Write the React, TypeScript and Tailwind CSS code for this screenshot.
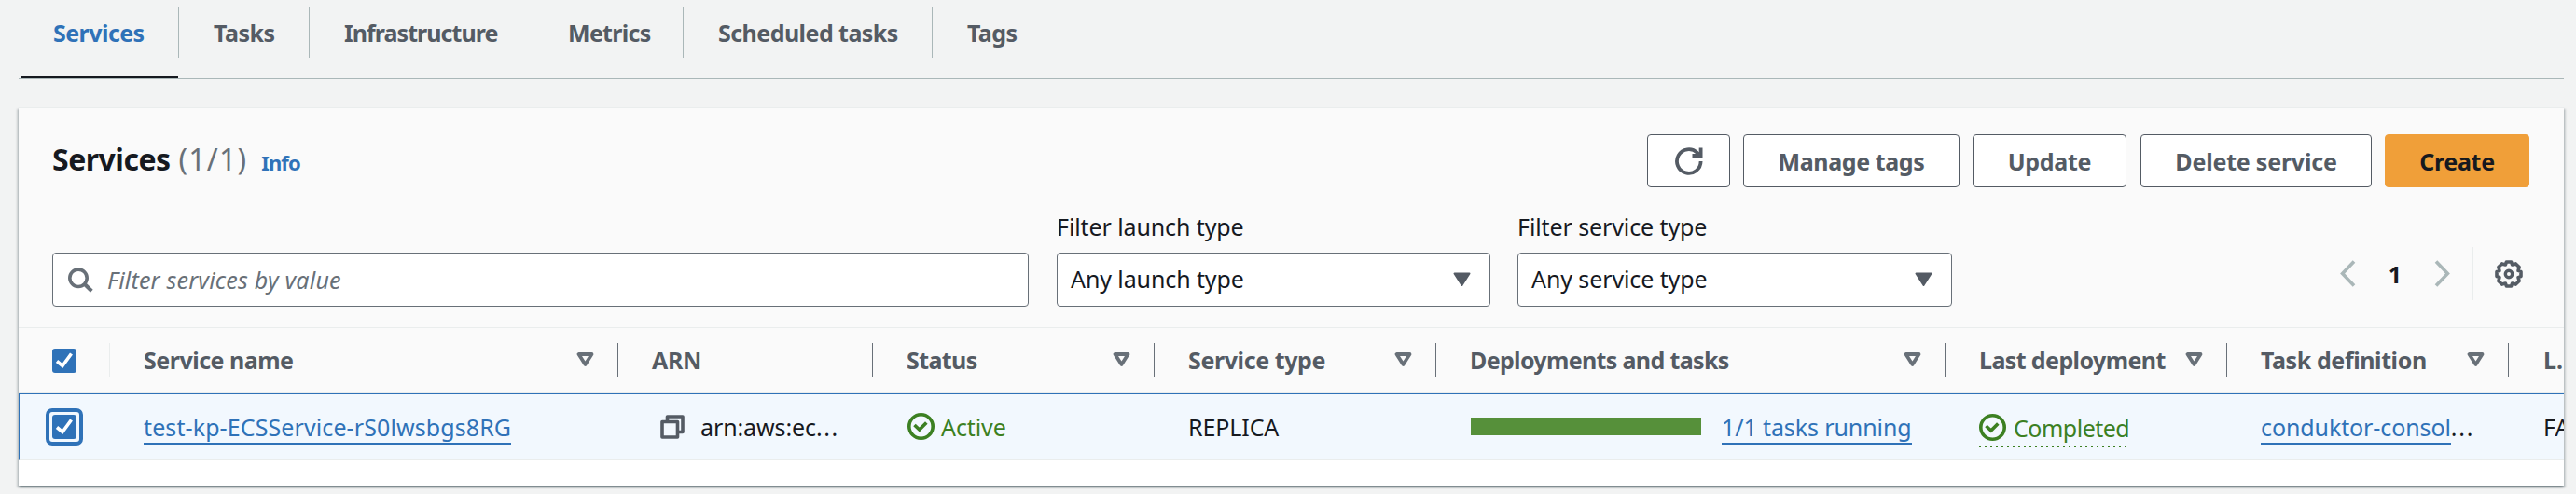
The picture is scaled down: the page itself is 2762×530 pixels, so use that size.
import type { ReactNode } from "react";

const tabs = [
  { label: "Services", cls: "w-[172px] tracking-[-0.55px] text-[#2f72b8]" },
  { label: "Tasks", cls: "w-[140px] tracking-[-0.5px]" },
  { label: "Infrastructure", cls: "w-[240px] tracking-[-0.95px]" },
  { label: "Metrics", cls: "w-[161px] tracking-[-0.7px]" },
  { label: "Scheduled tasks", cls: "w-[267px] tracking-[-0.55px]" },
  { label: "Tags", cls: "w-[150px] tracking-[-0.6px]" },
];

const columns = [
  { label: "Service name", sortable: true, tracking: "tracking-[-0.5px]" },
  { label: "ARN", sortable: false, tracking: "tracking-[-0.3px]" },
  { label: "Status", sortable: true, tracking: "tracking-[-0.6px]" },
  { label: "Service type", sortable: true, tracking: "tracking-[-0.4px]" },
  { label: "Deployments and tasks", sortable: true, tracking: "tracking-[-0.65px]" },
  { label: "Last deployment", sortable: true, tracking: "tracking-[-0.6px]" },
  { label: "Task definition", sortable: true, tracking: "tracking-[-0.4px]" },
];

const gridCols =
  "grid grid-cols-[98px_545px_273px_302px_302px_546px_302px_302px_59px]";

function Checkbox() {
  return (
    <svg width="26" height="26" viewBox="0 0 26 26" className="block">
      <rect width="26" height="26" rx="3" fill="#2f72b8" />
      <path d="M5 13.5 L11 18.5 L20.5 5.5" fill="none" stroke="#fff" strokeWidth="3.6" />
    </svg>
  );
}

function SortIcon() {
  return (
    <svg width="19" height="16" viewBox="0 0 19 16" className="mt-[-2px] shrink-0">
      <path d="M2.5 2 H16.5 L9.5 13 Z" fill="none" stroke="#687078" strokeWidth="3.8" strokeLinejoin="round" />
    </svg>
  );
}

function CaretIcon() {
  return (
    <svg width="19" height="16" viewBox="0 0 19 16" className="shrink-0">
      <path d="M1.5 1.5 H17.5 L9.5 14 Z" fill="#545b64" stroke="#545b64" strokeWidth="2" strokeLinejoin="round" />
    </svg>
  );
}

function CheckCircle() {
  return (
    <svg width="29" height="29" viewBox="0 0 29 29" className="shrink-0">
      <circle cx="14.5" cy="14.5" r="12.7" fill="none" stroke="#3c8022" strokeWidth="3.6" />
      <path d="M7.5 13 L12.8 18 L20.3 10.4" fill="none" stroke="#3c8022" strokeWidth="3.6" />
    </svg>
  );
}

function CopyIcon() {
  return (
    <svg width="26" height="26" viewBox="0 0 26 26" className="shrink-0">
      <path d="M7.5 7 V2 H24 V18.5 H19" fill="none" stroke="#545b64" strokeWidth="3.6" strokeLinejoin="round" />
      <rect x="2" y="7.5" width="16.5" height="16.5" fill="none" stroke="#545b64" strokeWidth="3.6" strokeLinejoin="round" />
    </svg>
  );
}

function RefreshIcon() {
  return (
    <svg width="30" height="30" viewBox="0 0 30 30">
      <path d="M27.6 15 A12.8 12.8 0 1 1 23.8 5.9 L27 8.8" fill="none" stroke="#545b64" strokeWidth="3.8" />
      <path d="M27.6 0.5 V9 H18.5" fill="none" stroke="#545b64" strokeWidth="3.8" />
    </svg>
  );
}

function SearchIcon() {
  return (
    <svg width="27" height="27" viewBox="0 0 27 27" className="shrink-0">
      <circle cx="11" cy="11.3" r="9.2" fill="none" stroke="#687078" strokeWidth="3.6" />
      <path d="M17.6 17.8 L25.3 25.3" stroke="#687078" strokeWidth="4" />
    </svg>
  );
}

function Chevron({ direction }: { direction: "left" | "right" }) {
  return (
    <svg width="17" height="29" viewBox="0 0 17 29">
      <path
        d={direction === "left" ? "M15 1.5 L2.6 14.5 L15 27.5" : "M2 1.5 L14.4 14.5 L2 27.5"}
        fill="none"
        stroke="#aab7b8"
        strokeWidth="3.6"
      />
    </svg>
  );
}

function GearIcon() {
  return (
    <svg width="30" height="30" viewBox="0 0 30 30">
      <path
        d="M12.4 2 H17.6 L18.6 5 L22.4 3.9 L26.1 7.6 L25 11.4 L28 12.4 V17.6 L25 18.6 L26.1 22.4 L22.4 26.1 L18.6 25 L17.6 28 H12.4 L11.4 25 L7.6 26.1 L3.9 22.4 L5 18.6 L2 17.6 V12.4 L5 11.4 L3.9 7.6 L7.6 3.9 L11.4 5 Z"
        fill="none"
        stroke="#545b64"
        strokeWidth="3.6"
        strokeLinejoin="round"
      />
      <circle cx="15" cy="15" r="3.7" fill="none" stroke="#545b64" strokeWidth="3.4" />
    </svg>
  );
}

function Button({ className, children }: { className: string; children: ReactNode }) {
  return (
    <button
      className={`flex h-[57px] items-center justify-center rounded-[4px] border font-bold whitespace-nowrap ${className}`}
    >
      {children}
    </button>
  );
}

function Select({ label, value, className }: { label: string; value: string; className: string }) {
  return (
    <div className={`flex flex-col ${className}`}>
      <label className="mb-[11px] h-[34px] leading-[34px] tracking-[-0.1px]">{label}</label>
      <div className="flex h-[58px] items-center justify-between rounded-[4px] border border-[#687078] bg-white pr-[20px] pb-px pl-[14px]">
        <span className="pb-px tracking-[-0.1px]">{value}</span>
        <CaretIcon />
      </div>
    </div>
  );
}

export default function App() {
  return (
    <div className="h-[530px] w-[2762px] overflow-hidden bg-[#f2f3f3] font-['Noto_Sans',sans-serif] text-[25px] leading-[34px] text-[#16191f]">
      <nav className="ml-5 flex h-[85px] w-[2729px] border-b border-[#aab7b8] pt-[7px] font-bold text-[#545b64]">
        {tabs.map((tab, i) => (
          <div key={tab.label} className={`flex flex-col justify-between ${tab.cls}`}>
            <div
              className={`flex h-[55px] items-center pl-[37px] ${i < tabs.length - 1 ? "border-r border-[#aab7b8]" : ""}`}
            >
              {tab.label}
            </div>
            {i === 0 && <div className="mr-px ml-[3px] h-[2px] bg-[#16191f]" />}
          </div>
        ))}
      </nav>

      <section className="mt-[30px] ml-5 h-[406px] w-[2729px] border-t border-[#eaeded] bg-white shadow-[0_2px_2px_0_rgba(0,28,36,0.3),2px_2px_2px_0_rgba(0,28,36,0.15),-2px_2px_2px_0_rgba(0,28,36,0.15)]">
        <header className="flex h-[235px] flex-col bg-[#fafafa] pr-[37px] pl-[36px]">
          <div className="flex items-start justify-between pt-[28px]">
            <h2 className="mt-[5px] flex items-baseline text-[32px] leading-[44px] font-bold tracking-[-0.5px]">
              Services
              <span className="ml-[9px] font-normal tracking-[1.2px] text-[#687078]">(1/1)</span>
              <a className="ml-[15px] text-[22px] tracking-[-0.9px] text-[#2f72b8]">Info</a>
            </h2>
            <div className="flex text-[#545b64]">
              <Button className="mr-[14px] w-[89px] border-[#545b64] bg-white">
                <RefreshIcon />
              </Button>
              <Button className="mr-[14px] w-[232px] border-[#545b64] bg-white tracking-[-0.4px]">Manage tags</Button>
              <Button className="mr-[15px] w-[165px] border-[#545b64] bg-white tracking-[-0.3px]">Update</Button>
              <Button className="mr-[14px] w-[248px] border-[#545b64] bg-white tracking-[-0.2px]">
                Delete service
              </Button>
              <Button className="w-[155px] border-[#f09f39] bg-[#f09f39] tracking-[-0.3px] text-[#16191f]">
                Create
              </Button>
            </div>
          </div>

          <div className="mt-[25px] flex items-end">
            <div className="flex h-[58px] w-[1047px] items-center rounded-[4px] border border-[#687078] bg-white pl-[16px]">
              <SearchIcon />
              <span className="ml-[15px] pb-px tracking-[0.2px] text-[#687078] italic">Filter services by value</span>
            </div>
            <Select className="ml-[30px] w-[465px]" label="Filter launch type" value="Any launch type" />
            <Select className="ml-[29px] w-[466px]" label="Filter service type" value="Any service type" />
            <div className="mb-[7px] ml-auto flex h-[57px] items-center">
              <Chevron direction="left" />
              <span className="flex w-[84px] justify-center font-bold">1</span>
              <Chevron direction="right" />
              <div className="ml-[24px] h-[57px] w-px bg-[#eaeded]" />
              <div className="mr-[7px] ml-[23px]">
                <GearIcon />
              </div>
            </div>
          </div>
        </header>

        <div className="overflow-hidden">
          <div
            className={`${gridCols} h-[71px] items-center border-t border-b border-[#eaeded] bg-[#fafafa] font-bold text-[#545b64]`}
          >
            <div className="flex h-[37px] items-center border-r border-[#eaeded] pl-[36px]">
              <Checkbox />
            </div>
            {columns.map((column) => (
              <div
                key={column.label}
                className={`flex h-[37px] items-center justify-between border-r border-[#687078] pr-[25px] pl-[36px] whitespace-nowrap ${column.tracking}`}
              >
                <span className="pb-px">{column.label}</span>
                {column.sortable && <SortIcon />}
              </div>
            ))}
            <div className="overflow-hidden pb-px pl-[37px] whitespace-nowrap">L…</div>
          </div>

          <div
            className={`${gridCols} h-[71px] items-center border-t border-b border-l border-t-[#2f72b8] border-b-[#eaeded] border-l-[#2f72b8] bg-[#f2f8fe] whitespace-nowrap`}
          >
            <div className="pl-[28px]">
              <div className="flex h-10 w-10 items-center justify-center rounded-[7px] border-4 border-[#2f72b8]">
                <Checkbox />
              </div>
            </div>
            <div className="pl-[35px]">
              <a className="inline-block border-b-2 border-[#2f72b8] pt-[3px] tracking-[0.1px] text-[#2f72b8]">
                test-kp-ECSService-rS0lwsbgs8RG
              </a>
            </div>
            <div className="flex items-center pl-[44px]">
              <CopyIcon />
              <span className="ml-[17px] pt-px tracking-[-0.1px]">
                arn:aws:ec<span className="tracking-[1.6px]">...</span>
              </span>
            </div>
            <div className="flex items-center pl-[36px] text-[#3c8022]">
              <CheckCircle />
              <span className="ml-[7px] pt-px tracking-[-0.1px]">Active</span>
            </div>
            <div className="pt-px pl-[35px] tracking-[-0.1px]">REPLICA</div>
            <div className="flex items-center pl-[36px]">
              <div className="h-[19px] w-[247px] bg-[#56903a]" />
              <a className="ml-[22px] border-b-2 border-[#2f72b8] pt-[3px] tracking-[-0.1px] text-[#2f72b8]">
                1/1 tasks running
              </a>
            </div>
            <div className="flex pl-[35px] text-[#3c8022]">
              <span className="mt-[6px] flex flex-col">
                <span className="flex h-[34px] items-center">
                  <CheckCircle />
                  <span className="ml-[8px] tracking-[-0.5px]">Completed</span>
                </span>
                <span className="mt-[3px] h-px bg-[repeating-linear-gradient(90deg,#3c8022_0_2px,transparent_2px_6px)]" />
              </span>
            </div>
            <div className="pl-[35px]">
              <a className="inline-block border-b-2 border-[#2f72b8] pt-[3px] tracking-[-0.1px] text-[#2f72b8]">
                conduktor-consol
              </a>
              <span className="tracking-[1.8px]">...</span>
            </div>
            <div className="overflow-hidden pt-px pl-[36px]">FARGATE</div>
          </div>
        </div>
      </section>
    </div>
  );
}
